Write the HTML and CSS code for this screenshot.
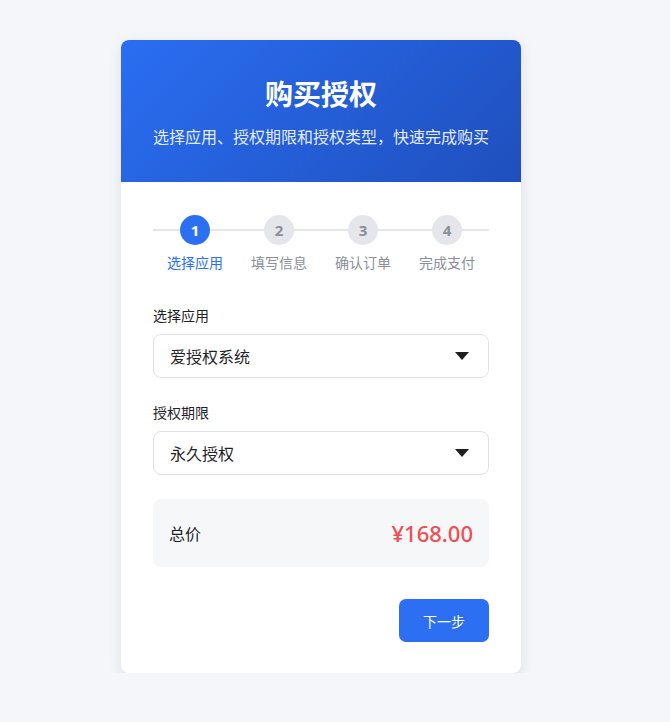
FILE: index.html
```html
<!DOCTYPE html>
<html lang="zh-CN">
<head>
<meta charset="utf-8">
<title>购买授权</title>
<link rel="stylesheet" href="styles.css">
</head>
<body>
<div class="page">
  <div class="card">
    <div class="card-header">
      <h1 class="title">购买授权</h1>
      <p class="subtitle">选择应用、授权期限和授权类型，快速完成购买</p>
    </div>
    <div class="card-body">
      <div class="steps">
        <div class="step active"><span class="dot">1</span><span class="step-label">选择应用</span></div>
        <div class="step"><span class="dot">2</span><span class="step-label">填写信息</span></div>
        <div class="step"><span class="dot">3</span><span class="step-label">确认订单</span></div>
        <div class="step"><span class="dot">4</span><span class="step-label">完成支付</span></div>
      </div>

      <div class="field">
        <label class="field-label">选择应用</label>
        <div class="select"><span>爱授权系统</span><span class="caret"></span></div>
      </div>

      <div class="field">
        <label class="field-label">授权期限</label>
        <div class="select"><span>永久授权</span><span class="caret"></span></div>
      </div>

      <div class="total">
        <span class="total-label">总价</span>
        <span class="total-price">¥168.00</span>
      </div>

      <div class="actions">
        <button class="btn-next">下一步</button>
      </div>
    </div>
  </div>
</div>
</body>
</html>
```

FILE: styles.css
```css
* { box-sizing: border-box; }
html, body { margin: 0; padding: 0; }
body {
  background: #f5f6fa;
  font-family: "Noto Sans", "Noto Sans CJK SC", sans-serif;
  color: #1f2329;
}
.page {
  display: flex;
  justify-content: center;
  padding-top: 40px;
  padding-right: 28px;
}
.card {
  width: 400px;
  background: #fff;
  border-radius: 8px;
  overflow: hidden;
  box-shadow: 0 4px 14px rgba(20, 30, 60, 0.10);
}
.card-header {
  height: 142px;
  background: linear-gradient(135deg, #2a6ef2 0%, #1f4fbd 100%);
  color: #fff;
  text-align: center;
  padding-top: 34px;
}
.title {
  margin: 0;
  font-size: 28px;
  font-weight: 700;
  line-height: 40px;
}
.subtitle {
  margin: 12px 0 0;
  font-size: 16px;
  line-height: 22px;
  color: rgba(255, 255, 255, 0.9);
}
.card-body {
  padding: 32px 32px 31px;
}
.steps {
  display: grid;
  grid-template-columns: repeat(4, 1fr);
  position: relative;
}
.steps::before {
  content: "";
  position: absolute;
  left: 0;
  right: 0;
  top: 15px;
  height: 2px;
  background: #e4e6eb;
}
.step {
  display: flex;
  flex-direction: column;
  align-items: center;
  position: relative;
}
.dot {
  width: 30px;
  height: 30px;
  border-radius: 50%;
  background: #e4e6eb;
  color: #8a8f99;
  display: flex;
  align-items: center;
  justify-content: center;
  font-size: 15px;
  font-weight: 700;
  margin-top: 1px;
}
.step-label {
  margin-top: 8px;
  font-size: 14px;
  line-height: 20px;
  color: #8a8f99;
}
.step.active .dot { background: #2b6ff2; color: #fff; }
.step.active .step-label { color: #2b6ff2; }

.field { margin-top: 33px; }
.field + .field { margin-top: 25px; }
.field-label {
  display: block;
  font-size: 14px;
  line-height: 20px;
  color: #1f2329;
  margin-bottom: 8px;
}
.select {
  height: 44px;
  border: 1px solid #dfe1e6;
  border-radius: 8px;
  display: flex;
  align-items: center;
  justify-content: space-between;
  padding: 0 19px 0 16px;
  font-size: 16px;
  color: #1f2329;
}
.caret {
  width: 0;
  height: 0;
  border-left: 7px solid transparent;
  border-right: 7px solid transparent;
  border-top: 8px solid #1f1f1f;
}
.total {
  margin-top: 24px;
  height: 68px;
  background: #f6f7f9;
  border-radius: 8px;
  display: flex;
  align-items: center;
  justify-content: space-between;
  padding: 0 16px;
}
.total-label { font-size: 16px; color: #1f2329; }
.total-price {
  font-size: 22px;
  color: #f04e53;
  font-weight: 500;
}
.actions {
  margin-top: 32px;
  display: flex;
  justify-content: flex-end;
}
.btn-next {
  width: 90px;
  height: 43px;
  border: none;
  border-radius: 7px;
  background: #2d6ff2;
  color: #fff;
  font-family: inherit;
  font-size: 14px;
  cursor: pointer;
}
```
